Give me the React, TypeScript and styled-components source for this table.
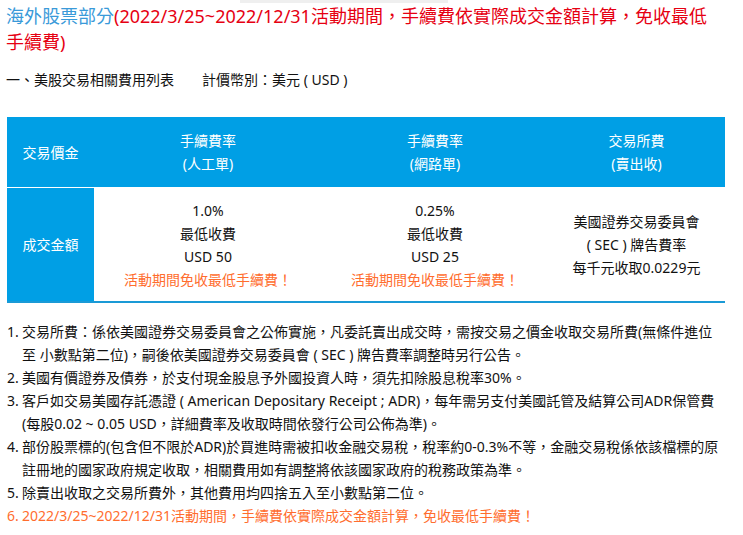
import React from "react";
import styled, { createGlobalStyle } from "styled-components";

const Global = createGlobalStyle`
  html, body { margin: 0; padding: 0; background: #fff; }
  body { font-family: "Noto Sans", "Noto Sans CJK TC", sans-serif; color: #111; }
`;

const Page = styled.div`
  position: relative;
  width: 743px;
  padding: 3px 0 0 6px;
  box-sizing: border-box;
`;

const TopStrip = styled.div`
  position: absolute;
  top: 0;
  left: 240px;
  width: 208px;
  height: 3px;
  background: #efefef;
`;

const Title = styled.h1`
  margin: 0;
  font-size: 18px;
  font-weight: 400;
  line-height: 26px;
  color: #e60012;
  width: 705px;
`;

const Blue = styled.span`
  color: #3a9ad9;
`;

const Subtitle = styled.div`
  margin-top: 15px;
  font-size: 14px;
  line-height: 20px;
  white-space: pre;
`;

const Table = styled.div`
  margin: 27px 0 0 1px;
  width: 718px;
  display: grid;
  grid-template-columns: 87px 228px 226px 177px;
  border-bottom: 2px solid #1a9ad6;
`;

const Cell = styled.div<{ $head?: boolean; $side?: boolean }>`
  display: flex;
  flex-direction: column;
  align-items: center;
  justify-content: center;
  text-align: center;
  font-size: 14px;
  line-height: 23px;
  height: ${(p) => (p.$head ? "70px" : "113px")};
  background: ${(p) => (p.$head || p.$side ? "#009fe5" : "#fff")};
  color: ${(p) => (p.$head || p.$side ? "#fff" : "#111")};
  border-top: ${(p) => (p.$head ? "none" : "1px solid #fff")};
`;

const Promo = styled.span`
  color: #ff6d2e;
`;

const Notes = styled.ol`
  list-style: none;
  margin: 17px 0 0 0;
  padding: 0;
  font-size: 14px;
  line-height: 23px;
`;

const Item = styled.li<{ $promo?: boolean }>`
  display: flex;
  white-space: nowrap;
  color: ${(p) => (p.$promo ? "#ff6d2e" : "#111")};
`;

const Num = styled.span`
  flex: 0 0 15px;
  padding-left: 1px;
`;

const notes: { t: React.ReactNode; promo?: boolean }[] = [
  {
    t: (
      <>
        交易所費：係依美國證券交易委員會之公佈實施，凡委託賣出成交時，需按交易之價金收取交易所費(無條件進位
        <br />至 小數點第二位)，嗣後依美國證券交易委員會 ( SEC ) 牌告費率調整時另行公告。
      </>
    ),
  },
  { t: <>美國有價證券及債券，於支付現金股息予外國投資人時，須先扣除股息稅率30%。</> },
  {
    t: (
      <>
        客戶如交易美國存託憑證 ( American Depositary Receipt ; ADR)，每年需另支付美國託管及結算公司ADR保管費
        <br />(每股0.02 ~ 0.05 USD，詳細費率及收取時間依發行公司公佈為準)。
      </>
    ),
  },
  {
    t: (
      <>
        部份股票標的(包含但不限於ADR)於買進時需被扣收金融交易稅，稅率約0-0.3%不等，金融交易稅係依該檔標的原
        <br />註冊地的國家政府規定收取，相關費用如有調整將依該國家政府的稅務政策為準。
      </>
    ),
  },
  { t: <>除賣出收取之交易所費外，其他費用均四捨五入至小數點第二位。</> },
  {
    t: <>2022/3/25~2022/12/31活動期間，手續費依實際成交金額計算，免收最低手續費！</>,
    promo: true,
  },
];

export default function App() {
  return (
    <>
      <Global />
      <Page>
        <TopStrip />
        <Title>
          <Blue>海外股票部分</Blue>(2022/3/25~2022/12/31活動期間，手續費依實際成交金額計算，免收最低手續費)
        </Title>
        <Subtitle>{"一、美股交易相關費用列表　　計價幣別：美元 ( USD )"}</Subtitle>
        <Table>
          <Cell $head>交易價金</Cell>
          <Cell $head>
            <span>手續費率</span>
            <span>(人工單)</span>
          </Cell>
          <Cell $head>
            <span>手續費率</span>
            <span>(網路單)</span>
          </Cell>
          <Cell $head>
            <span>交易所費</span>
            <span>(賣出收)</span>
          </Cell>
          <Cell $side>成交金額</Cell>
          <Cell>
            <span>1.0%</span>
            <span>最低收費</span>
            <span>USD 50</span>
            <Promo>活動期間免收最低手續費！</Promo>
          </Cell>
          <Cell>
            <span>0.25%</span>
            <span>最低收費</span>
            <span>USD 25</span>
            <Promo>活動期間免收最低手續費！</Promo>
          </Cell>
          <Cell>
            <span>美國證券交易委員會</span>
            <span>( SEC ) 牌告費率</span>
            <span>每千元收取0.0229元</span>
          </Cell>
        </Table>
        <Notes>
          {notes.map((n, i) => (
            <Item key={i} $promo={n.promo}>
              <Num>{i + 1}.</Num>
              <span>{n.t}</span>
            </Item>
          ))}
        </Notes>
      </Page>
    </>
  );
}
